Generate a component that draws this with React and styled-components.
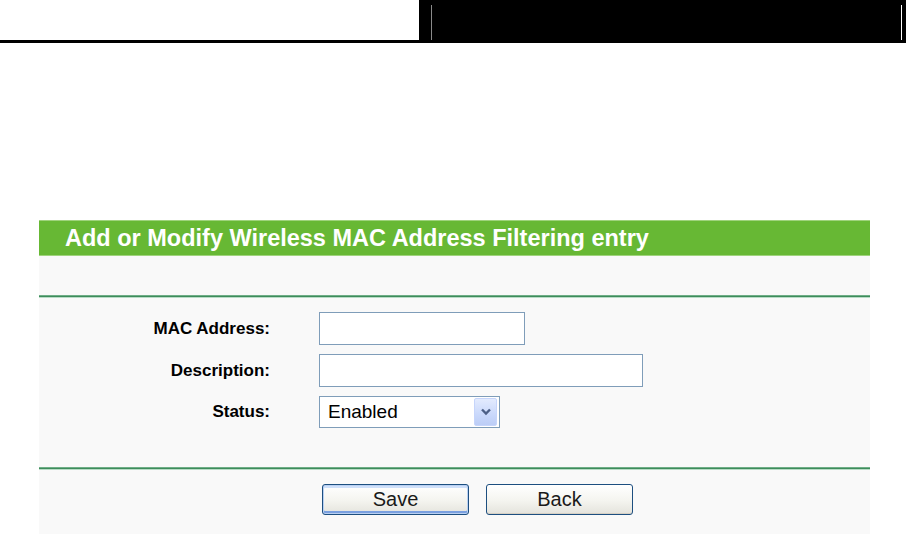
import React from "react";
import styled, { createGlobalStyle } from "styled-components";

const GlobalStyle = createGlobalStyle`
  html, body {
    margin: 0;
    padding: 0;
    background: #ffffff;
    font-family: "Liberation Sans", Arial, sans-serif;
  }
  * { box-sizing: border-box; }
`;

export default function App() {
  return (
    <>
      <GlobalStyle />
      <TopBar>
        <TopBlank />
        <TopBlock>
          <Rule color="#8a8a8a" />
          <Rule color="#ffffff" />
        </TopBlock>
      </TopBar>

      <Panel>
        <PanelTitle>Add or Modify Wireless MAC Address Filtering entry</PanelTitle>
        <Band />
        <Divider />
        <Form>
          <Label>MAC Address:</Label>
          <TextField width={206} />
          <Label>Description:</Label>
          <TextField width={324} />
          <Label>Status:</Label>
          <SelectBox>
            <span>Enabled</span>
            <ArrowButton>
              <svg width="12" height="8" viewBox="0 0 12 8">
                <polyline points="2,1.5 6,5.5 10,1.5" fill="none" stroke="#4c5f86" strokeWidth="2.4" />
              </svg>
            </ArrowButton>
          </SelectBox>
        </Form>
        <Divider />
        <Buttons>
          <Button primary>Save</Button>
          <Button>Back</Button>
        </Buttons>
      </Panel>
    </>
  );
}

const TopBar = styled.div`
  display: flex;
  height: 43px;
`;

const TopBlank = styled.div`
  width: 419px;
  height: 43px;
  border-bottom: 3px solid #000;
`;

const TopBlock = styled.div`
  flex: 1;
  display: flex;
  justify-content: space-between;
  background: #000;
  padding: 5px 4px 3px 12px;
`;

const Rule = styled.div`
  width: 1px;
  background: ${(p) => p.color};
`;

const Panel = styled.div`
  margin: 177px 0 0 39px;
  width: 831px;
  background: #f9f9f9;
  height: 314px;
`;

const PanelTitle = styled.div`
  height: 36px;
  background: #67b834;
  border-top: 1px solid #9fd37c;
  border-bottom: 1px solid #9fd37c;
  color: #fff;
  font-weight: bold;
  font-size: 23.5px;
  line-height: 34px;
  padding-left: 26px;
  white-space: nowrap;
`;

const Band = styled.div`
  height: 39px;
`;

const Divider = styled.div`
  height: 3px;
  background: #3e8c5c;
  border-top: 1px solid #6fae86;
  border-bottom: 1px solid #b9dcc6;
`;

const Form = styled.div`
  display: grid;
  grid-template-columns: 231px auto;
  column-gap: 49px;
  row-gap: 9px;
  align-items: center;
  justify-items: start;
  padding: 14px 0 39px;
`;

const Label = styled.div`
  justify-self: end;
  font-weight: bold;
  font-size: 17px;
  color: #000;
`;

const TextField = styled.div`
  width: ${(p) => p.width}px;
  height: 33px;
  background: #fff;
  border: 1px solid #7f9db9;
`;

const SelectBox = styled.div`
  width: 181px;
  height: 32px;
  background: #fff;
  border: 1px solid #7f9db9;
  display: flex;
  align-items: center;
  justify-content: space-between;
  padding: 1px 2px 1px 8px;
  font-size: 19px;
  color: #000;
`;

const ArrowButton = styled.div`
  width: 23px;
  height: 28px;
  display: flex;
  align-items: center;
  justify-content: center;
  border: 1px solid #c6d5fb;
  border-radius: 2px;
  background: linear-gradient(#e3ebfe, #c9d8fb 60%, #bccdf6);
`;

const Buttons = styled.div`
  display: flex;
  gap: 17px;
  padding: 14px 0 0 283px;
`;

const Button = styled.button`
  width: 147px;
  height: 31px;
  border: 1px solid #1d4f80;
  border-radius: 3px;
  background: linear-gradient(#ffffff, #f4f4ef 55%, #e4e3dc);
  font-family: "Liberation Sans", Arial, sans-serif;
  font-size: 20px;
  color: #1a1a1a;
  padding: 0;
  box-shadow: ${(p) =>
    p.primary ? "inset 0 0 0 1px #b9d0f2, inset 0 -2px 0 1px #7aa0e0, inset 0 2px 0 1px #cfe0fa" : "inset 0 -1px 0 #d6d0c4"};
`;
